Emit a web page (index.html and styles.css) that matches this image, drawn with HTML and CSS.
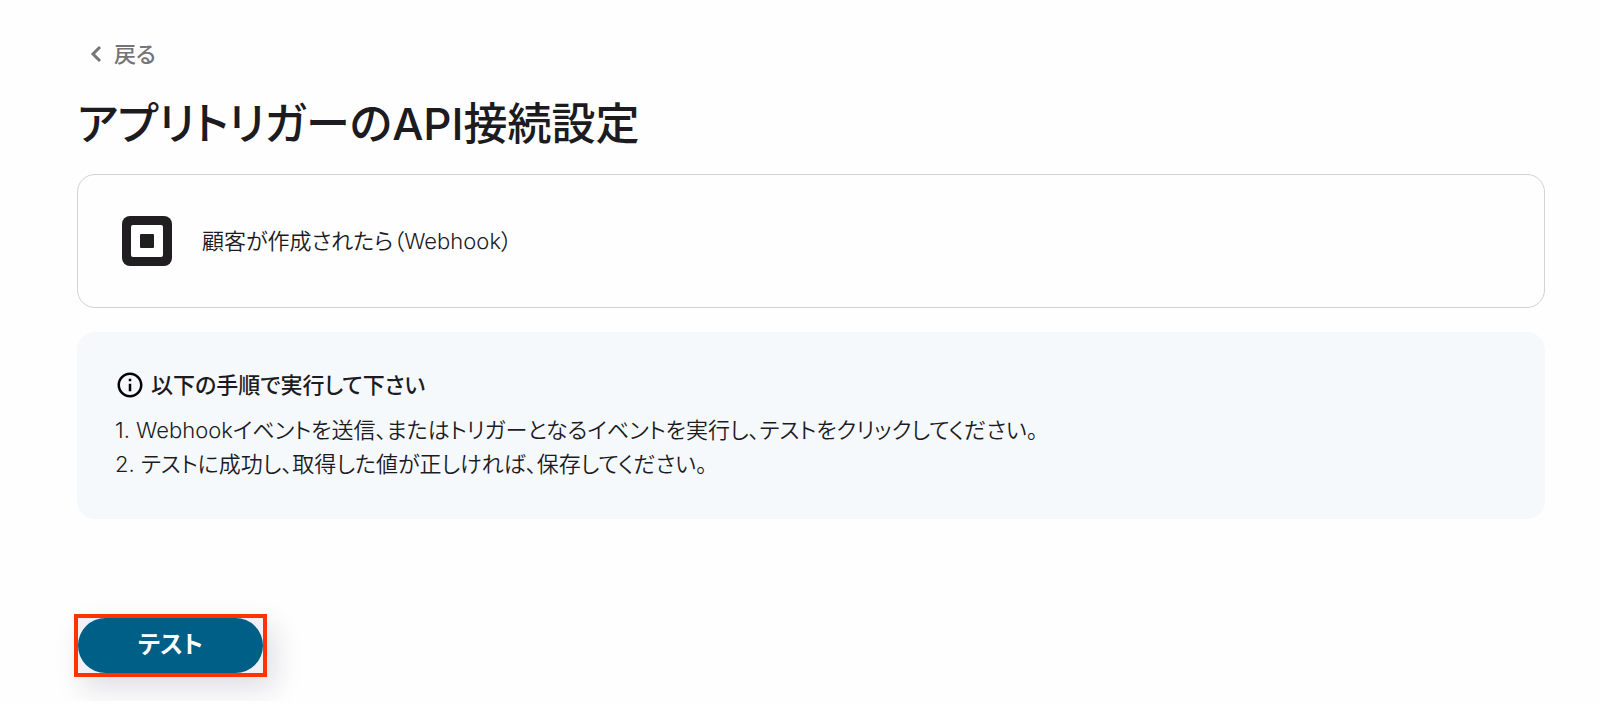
FILE: index.html
```html
<!DOCTYPE html>
<html lang="ja">
<head>
  <meta charset="UTF-8" />
  <meta name="viewport" content="width=device-width, initial-scale=1" />
  <title>アプリトリガーのAPI接続設定</title>
  <link rel="stylesheet" href="styles.css">
</head>
<body>
  <main class="container">
    <a href="#" class="back-link">
      <svg class="back-icon" viewBox="0 0 12 18" aria-hidden="true">
        <path d="M10 2 3 9l7 7" />
      </svg>
      戻る
    </a>
    <h1 class="page-title">アプリトリガーのAPI接続設定</h1>

    <section class="trigger-card">
      <svg class="trigger-logo" viewBox="0 0 50 50" aria-hidden="true">
        <rect width="50" height="50" rx="8" fill="#201e21" />
        <rect x="9" y="9" width="32" height="32" rx="2" fill="#fff" />
        <rect x="18" y="18" width="14" height="14" rx="1" fill="#201e21" />
      </svg>
      <span class="trigger-name">顧客が作成されたら（Webhook）</span>
    </section>

    <section class="guide">
      <h2 class="guide-title">
        <svg class="guide-icon" viewBox="0 0 24 24" aria-hidden="true">
          <path d="M11 7h2v2h-2zm0 4h2v6h-2zm1-9C6.480 2 2 6.480 2 12s4.480 10 10 10 10-4.480 10-10S17.520 2 12 2zm0 18c-4.410 0-8-3.590-8-8s3.590-8 8-8 8 3.590 8 8-3.590 8-8 8z" />
        </svg>
        以下の手順で実行して下さい
      </h2>
      <p class="guide-step">1. Webhookイベントを送信、またはトリガーとなるイベントを実行し、テストをクリックしてください。</p>
      <p class="guide-step">2. テストに成功し、取得した値が正しければ、保存してください。</p>
    </section>

    <div class="highlight">
      <button type="button" class="test-btn">テスト</button>
    </div>
  </main>
</body>
</html>
```
FILE: styles.css
```css
* {
  box-sizing: border-box;
}
body {
  margin: 0;
  background: #fefefe;
  color: #1c1b1f;
  font-family: Inter, 'Noto Sans CJK JP', sans-serif;
  font-feature-settings: 'palt';
  font-size: 22px;
  font-weight: 350;
  line-height: 34px;
}
.container {
  padding: 37px 55px 24px 77px;
}
.back-link {
  display: inline-flex;
  align-items: center;
  gap: 12px;
  padding-left: 13px;
  color: #757478;
  font-size: 22px;
  font-weight: 500;
  text-decoration: none;
}
.back-icon {
  width: 12px;
  height: 18px;
  fill: none;
  stroke: currentColor;
  stroke-width: 3;
}
.page-title {
  margin: 20px 0 18px;
  font-size: 44px;
  font-weight: 500;
  line-height: 64px;
}
.trigger-card {
  display: flex;
  align-items: center;
  gap: 30px;
  padding: 41px 44px;
  border: 1px solid #d3d0d6;
  border-radius: 18px;
}
.trigger-logo {
  width: 50px;
  height: 50px;
}
.guide {
  margin-top: 24px;
  padding: 36px 38px 38px;
  border-radius: 18px;
  background: #f5f9fc;
}
.guide-title {
  display: flex;
  align-items: center;
  gap: 6px;
  margin: 0 0 11px;
  font-size: 22px;
  font-weight: 500;
}
.guide-icon {
  width: 30px;
  height: 30px;
}
.guide-step {
  margin: 0;
}
.highlight {
  width: fit-content;
  margin: 95px 0 0 -3px;
  border: 4px solid #ff3300;
  background: #f0f0f6;
  box-shadow: 8px 12px 28px #1c1b4022;
}
.test-btn {
  display: block;
  padding: 10px 60px 11px;
  border: 0;
  border-radius: 28px;
  background: #005f86;
  color: #fff;
  font: inherit;
  font-size: 24px;
  font-weight: 700;
  cursor: pointer;
}
```
